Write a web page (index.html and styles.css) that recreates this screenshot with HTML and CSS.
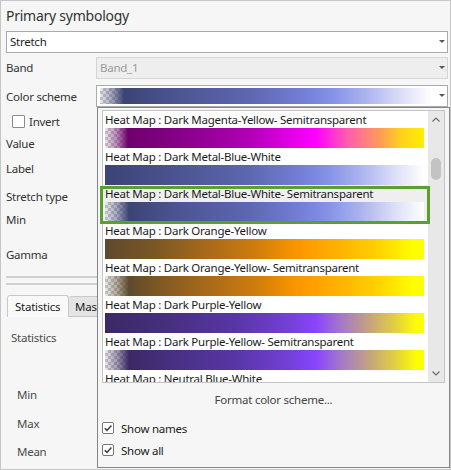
FILE: index.html
```html
<!DOCTYPE html>
<html lang="en">
<head>
<meta charset="utf-8">
<title>Primary symbology</title>
<link rel="stylesheet" href="styles.css">
</head>
<body>
<div class="window">
  <div class="title">Primary symbology</div>
  <div class="select wide"><span class="sel-text">Stretch</span><span class="caret"></span></div>
  <div class="row r-band">
    <span class="lbl">Band</span>
    <div class="select disabled"><span class="sel-text">Band_1</span><span class="caret"></span></div>
  </div>
  <div class="row r-scheme">
    <span class="lbl lbl-scheme">Color scheme</span>
    <div class="select scheme"><div class="scheme-ramp r-metal-semi"></div><span class="caret"></span></div>
  </div>

  <div class="fields">
    <div class="f-invert"><span class="cb-empty"></span><span>Invert</span></div>
    <div class="field f-value">Value</div>
    <div class="field f-label">Label</div>
    <div class="field f-stretch">Stretch type</div>
    <div class="field f-min">Min</div>
    <div class="field f-gamma">Gamma</div>
  </div>
  <div class="divider d1"></div>
  <div class="divider d2"></div>

  <div class="tabs">
    <div class="tab active">Statistics</div>
    <div class="tab inactive">Mask</div>
  </div>
  <div class="tabbody">
    <div class="stat-title">Statistics</div>
    <div class="stat s-min">Min</div>
    <div class="stat s-max">Max</div>
    <div class="stat s-mean">Mean</div>
  </div>

  <div class="popup">
    <div class="list">
      <div class="items">
        <div class="item">
          <div class="name">Heat Map : Dark Magenta-Yellow- Semitransparent</div>
          <div class="ramp r-magenta-semi"></div>
        </div>
        <div class="item">
          <div class="name">Heat Map : Dark Metal-Blue-White</div>
          <div class="ramp r-metal"></div>
        </div>
        <div class="item sel">
          <div class="name">Heat Map : Dark Metal-Blue-White- Semitransparent</div>
          <div class="ramp r-metal-semi"></div>
        </div>
        <div class="item">
          <div class="name">Heat Map : Dark Orange-Yellow</div>
          <div class="ramp r-orange"></div>
        </div>
        <div class="item">
          <div class="name">Heat Map : Dark Orange-Yellow- Semitransparent</div>
          <div class="ramp r-orange-semi"></div>
        </div>
        <div class="item">
          <div class="name">Heat Map : Dark Purple-Yellow</div>
          <div class="ramp r-purple"></div>
        </div>
        <div class="item">
          <div class="name">Heat Map : Dark Purple-Yellow- Semitransparent</div>
          <div class="ramp r-purple-semi"></div>
        </div>
        <div class="item">
          <div class="name">Heat Map : Neutral Blue-White</div>
          <div class="ramp r-metal"></div>
        </div>
      </div>
      <div class="sb">
        <div class="sb-btn"><svg width="8" height="5" viewBox="0 0 8 5"><polyline points="0.5,4.5 4,1 7.5,4.5" fill="none" stroke="#6a6a6a" stroke-width="1.1"/></svg></div>
        <div class="sb-track"><div class="sb-thumb"></div></div>
        <div class="sb-btn"><svg width="8" height="5" viewBox="0 0 8 5"><polyline points="0.5,0.5 4,4 7.5,0.5" fill="none" stroke="#6a6a6a" stroke-width="1.1"/></svg></div>
      </div>
    </div>
    <div class="fmt">Format color scheme...</div>
    <div class="opt"><span class="cbx"><svg width="10" height="10" viewBox="0 0 10 10"><polyline points="1.8,5.2 4,7.4 8.4,2.6" fill="none" stroke="#3c3c3c" stroke-width="1.5"/></svg></span><span>Show names</span></div>
    <div class="opt"><span class="cbx"><svg width="10" height="10" viewBox="0 0 10 10"><polyline points="1.8,5.2 4,7.4 8.4,2.6" fill="none" stroke="#3c3c3c" stroke-width="1.5"/></svg></span><span>Show all</span></div>
  </div>
</div>
</body>
</html>
```

FILE: styles.css
```css
:root {
  --chk: repeating-conic-gradient(#c8c8c8 0 25%, #f3f3f3 0 50%) 0 0 / 6px 6px;
}
* { box-sizing: border-box; }
html, body { margin: 0; padding: 0; }
body {
  font-family: "Noto Sans", "Open Sans", sans-serif;
  font-size: 11.5px;
  letter-spacing: -0.25px;
  color: #333;
  background: #fff;
}
.window {
  position: relative;
  width: 451px;
  height: 470px;
  border: 1px solid #c6c6c6;
  background: #f5f6f5;
  padding: 0 2px 0 5px;
  overflow: hidden;
}
.title {
  margin-top: 5px;
  font-size: 14px;
  line-height: 20px;
  color: #333;
}
.select {
  display: flex;
  align-items: center;
  height: 22px;
  border: 1px solid #a9a9a9;
  background: #fff;
  padding: 0 2px 0 3px;
  line-height: 20px;
  color: #1e1e1e;
}
.select.wide { margin-top: 5px; }
.sel-text { flex: 1; }
.caret {
  width: 0;
  height: 0;
  border-left: 3px solid transparent;
  border-right: 3px solid transparent;
  border-top: 3px solid #555;
  margin-top: -1px;
  margin-left: auto;
}
.row { display: flex; align-items: center; }
.row .lbl { width: 90px; flex: none; line-height: 22px; }
.row .lbl-scheme { padding-top: 2px; }
.row .select { flex: 1; }
.r-band { margin-top: 4px; }
.r-scheme { margin-top: 5px; }
.select.disabled {
  background: #eeeeee;
  border-color: #d5d5d5;
  color: #9b9b9b;
}
.scheme-ramp { width: 332px; height: 16px; flex: none; }

/* left fields */
.f-invert {
  height: 27px;
  display: flex;
  align-items: center;
  gap: 4px;
  padding-left: 6px;
}
.cb-empty {
  width: 13px;
  height: 13px;
  border: 1px solid #8a8a8a;
  border-radius: 1px;
  background: #fff;
}
.field { line-height: 17px; }
.f-label { margin-top: 8px; }
.f-stretch { margin-top: 11px; }
.f-min { margin-top: 6px; }
.f-gamma { margin-top: 18px; }
.divider { height: 2px; background: #d0d0d0; }
.d1 { margin-top: 13px; }
.d2 { margin-top: 5px; }

.tabs {
  display: flex;
  align-items: flex-end;
  margin-top: 10px;
  margin-left: 1px;
}
.tab {
  border: 1px solid #c9c9c9;
  border-bottom: none;
  border-radius: 3px 3px 0 0;
}
.tab.active {
  width: 62px;
  padding-left: 7px;
  line-height: 21px;
  background: #f9f9f9;
  color: #222;
}
.tab.inactive {
  border-left: none;
  padding: 0 6px;
  line-height: 19px;
  background: #e4e4e4;
  border-bottom: 1px solid #c9c9c9;
  color: #222;
}
.tabbody { padding-left: 5px; color: #4b4b4b; }
.stat-title { margin-top: 12px; line-height: 17px; }
.stat { padding-left: 6px; line-height: 17px; }
.s-min { margin-top: 40px; }
.s-max { margin-top: 12px; }
.s-mean { margin-top: 11px; }

/* popup */
.popup {
  position: absolute;
  left: 96px;
  top: 106px;
  right: 0;
  bottom: 1px;
  border: 1px solid #858585;
  background: #f5f6f5;
  padding: 2px 4px 0 4px;
  display: flex;
  flex-direction: column;
}
.list {
  height: 273px;
  flex: none;
  border: 1px solid #c4c4c4;
  background: #fff;
  display: flex;
}
.items {
  flex: 1;
  min-width: 0;
  clip-path: inset(0 -6px 0 -6px);
}
.item { position: relative; padding-left: 2px; }
.item .name {
  line-height: 17px;
  white-space: nowrap;
  color: #1b1b1b;
}
.item .ramp { width: 319px; height: 20px; }
.item.sel { background: #efefef; }
.item.sel::after {
  content: "";
  position: absolute;
  left: -3px;
  right: -2px;
  top: 1px;
  bottom: -2px;
  border: 3px solid #5c9f2e;
}
.sb {
  width: 16px;
  flex: none;
  background: #e8e8e8;
  display: flex;
  flex-direction: column;
}
.sb-btn {
  height: 17px;
  display: flex;
  align-items: center;
  justify-content: center;
}
.sb-track { flex: 1; }
.sb-thumb {
  width: 10px;
  height: 22px;
  margin: 30px 0 0 3px;
  border-radius: 5px;
  background: #c3c3c3;
}
.fmt {
  height: 34px;
  line-height: 34px;
  text-align: center;
  color: #444;
}
.opt {
  display: flex;
  align-items: center;
  height: 22px;
  gap: 7px;
  color: #222;
}
.cbx {
  width: 12px;
  height: 12px;
  border: 1px solid #767676;
  border-radius: 2px;
  background: #fff;
  display: flex;
  align-items: center;
  justify-content: center;
}

/* colour ramps */
.r-magenta-semi {
  background:
    linear-gradient(90deg, rgba(112,0,112,0.05) 0, rgba(112,0,112,0.45) 12px, #6e006e 23px, #8a008a 25%, #b000b4 45%, #e000e6 58%, #ff00ff 66%, #ff5cb0 76%, #ff9a58 86%, #ffd21a 93%, #ffee00 100%),
    var(--chk);
}
.r-metal {
  background: linear-gradient(90deg, #3c4375 0%, #4b5490 22%, #5d67b0 45%, #7480d8 62%, #8592e6 70%, #aab3ee 80%, #dcdff8 91%, #ffffff 100%);
}
.r-metal-semi {
  background:
    linear-gradient(90deg, rgba(60,67,117,0.05) 0, rgba(60,67,117,0.45) 12px, #3c4375 24px, #4b5490 22%, #5d67b0 45%, #7480d8 62%, #8592e6 70%, #aab3ee 80%, #dcdff8 91%, #ffffff 100%),
    var(--chk);
}
.r-orange {
  background: linear-gradient(90deg, #5e4a2e 0%, #7c5724 16%, #a86a1a 32%, #d07d0c 48%, #f59200 58%, #ff9c00 64%, #ffb800 76%, #ffd400 86%, #ffff00 97%, #ffff00 100%);
}
.r-orange-semi {
  background:
    linear-gradient(90deg, rgba(94,74,46,0.05) 0, rgba(94,74,46,0.45) 12px, #5e4a2e 24px, #7c5724 16%, #a86a1a 32%, #d07d0c 48%, #f59200 58%, #ff9c00 64%, #ffb800 76%, #ffd400 86%, #ffff00 97%, #ffff00 100%),
    var(--chk);
}
.r-purple {
  background: linear-gradient(90deg, #3b2965 0%, #46307f 20%, #5a36a8 42%, #7440d8 58%, #8844ff 66%, #a478c8 74%, #c4a47e 83%, #e2d040 91%, #ffff00 98%, #ffff00 100%);
}
.r-purple-semi {
  background:
    linear-gradient(90deg, rgba(59,41,101,0.05) 0, rgba(59,41,101,0.45) 12px, #3b2965 24px, #46307f 20%, #5a36a8 42%, #7440d8 58%, #8844ff 66%, #a478c8 74%, #c4a47e 83%, #e2d040 91%, #ffff00 98%, #ffff00 100%),
    var(--chk);
}
```
